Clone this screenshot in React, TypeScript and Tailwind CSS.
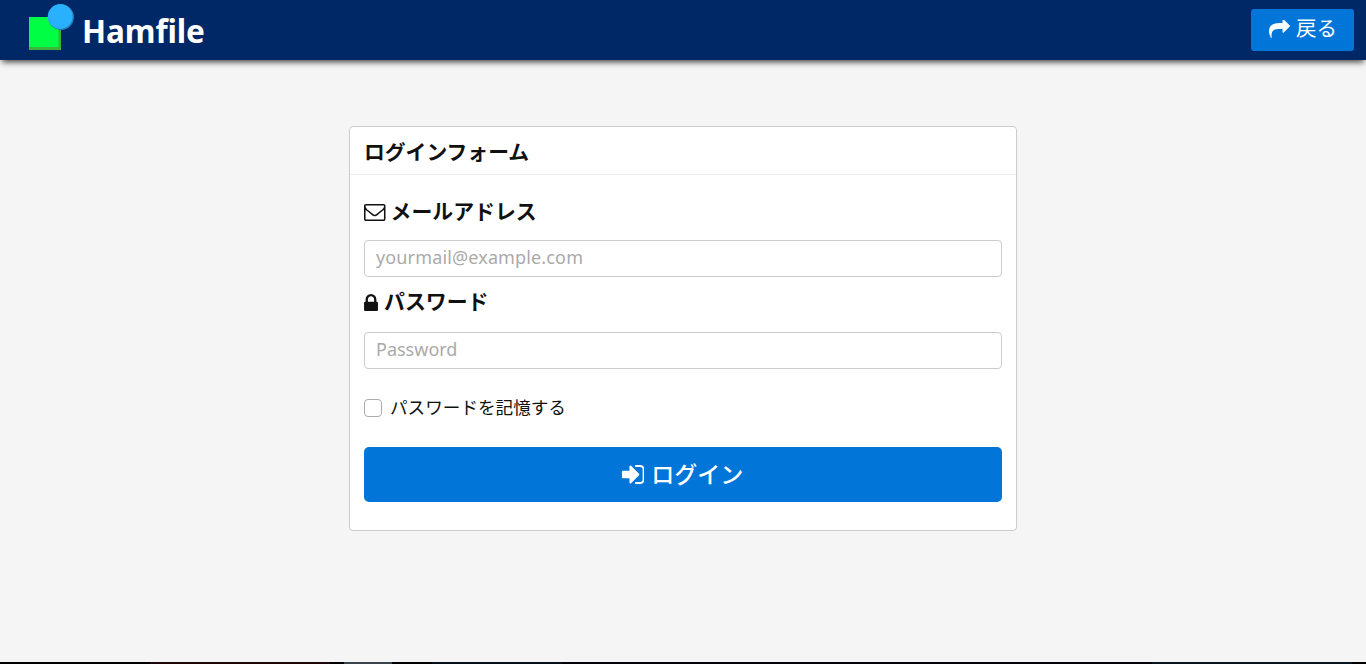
import React from 'react';

type IconProps = { className: string; viewBox: string; d: string };

function Icon({ className, viewBox, d }: IconProps) {
  return (
    <svg className={`block shrink-0 ${className}`} viewBox={viewBox} fill="currentColor" aria-hidden="true">
      <path d={d} />
    </svg>
  );
}

const SHARE =
  'M1792 640q0 26-19 45l-512 512q-19 19-45 19t-45-19-19-45v-256h-224q-98 0-175.500 6t-154 21.500-133 42.500-105.500 69.500-80 101-48.500 138.500-17.500 181q0 55 5 123 0 6 2.500 23.500t2.500 26.500q0 15-8.500 25t-23.500 10q-16 0-28-17-7-9-13-22t-13.500-30-10.500-24q-127-285-127-451 0-199 53-333 162-403 875-403h224v-256q0-26 19-45t45-19 45 19l512 512q19 19 19 45z';
const ENVELOPE =
  'M1664 1504v-768q-32 36-69 66-268 206-426 338-51 43-83 67t-86.500 48.500-102.500 24.500h-2q-48 0-102.500-24.500t-86.500-48.500-83-67q-158-132-426-338-37-30-69-66v768q0 13 9.500 22.500t22.500 9.500h1472q13 0 22.500-9.500t9.500-22.500zm0-1051v-24.500l-.5-13-3-12.500-5.500-9-9-7.500-14-2.500h-1472q-13 0-22.500 9.500t-9.500 22.500q0 168 147 284 193 152 401 317 6 5 35 29.500t46 37.500 44.500 31.500 50.500 27.500 43 9h2q20 0 43-9t50.500-27.500 44.500-31.500 46-37.500 35-29.500q208-165 401-317 54-43 100.500-115.500t46.500-131.500zm128-37v1088q0 66-47 113t-113 47h-1472q-66 0-113-47t-47-113v-1088q0-66 47-113t113-47h1472q66 0 113 47t47 113z';
const LOCK =
  'M640 768h512v-192q0-106-75-181t-181-75-181 75-75 181v192zm832 96v576q0 40-28 68t-68 28h-960q-40 0-68-28t-28-68v-576q0-40 28-68t68-28h32v-192q0-184 132-316t316-132 316 132 132 316v192h32q40 0 68 28t28 68z';
const SIGN_IN =
  'M1312 896q0 26-19 45l-544 544q-19 19-45 19t-45-19-19-45v-288h-448q-26 0-45-19t-19-45v-384q0-26 19-45t45-19h448v-288q0-26 19-45t45-19 45 19l544 544q19 19 19 45zm352-352v704q0 119-84.500 203.500t-203.500 84.500h-320q-13 0-22.500-9.500t-9.500-22.500q0-4-1-20t-.5-26.500 3-23.500 10-19.500 20.500-6.500h320q66 0 113-47t47-113v-704q0-66-47-113t-113-47h-312l-11.500-1-11.500-3-8-5.500-7-9-2-13.500q0-4-1-20t-.5-26.500 3-23.500 10-19.500 20.500-6.500h320q119 0 203.500 84.500t84.500 203.500z';

function Logo() {
  return (
    <svg className="block h-[60px] w-[50px] shrink-0" viewBox="28 0 50 60" aria-hidden="true">
      <rect x="29" y="17" width="32" height="33" fill="#3cb43c" />
      <rect x="29" y="17" width="29.500" height="30" fill="#00ff44" />
      <circle cx="61" cy="17.200" r="12.900" fill="#2480b8" />
      <circle cx="60.200" cy="16.400" r="12.400" fill="#29b0ff" />
    </svg>
  );
}

export default function App() {
  return (
    <div className="flex h-[664px] w-full flex-col overflow-hidden bg-[#f5f5f5] font-['Noto_Sans','Noto_Sans_CJK_JP',sans-serif] text-[#111]">
      <header className="flex h-[60px] shrink-0 items-center justify-between bg-[#002766] pr-3 pl-7 text-white shadow-[0_4px_6px_-2px_rgba(0,0,0,0.75)]">
        <a href="#" className="flex items-center">
          <Logo />
          <span className="ml-1 pt-px text-[31.500px] leading-none font-bold tracking-[-0.1px]">Hamfile</span>
        </a>
        <button className="flex h-[42px] w-[103px] items-center rounded-[3px] bg-[#0275d8] pl-[18px]">
          <Icon className="mb-0.5 h-[18px] w-[21px]" viewBox="0 128 1792 1536" d={SHARE} />
          <span className="ml-1.5 pb-[3px] text-[20.500px] leading-none">戻る</span>
        </button>
      </header>

      <main className="flex grow justify-center pt-[66px]">
        <section className="flex h-[405px] w-[668px] flex-col rounded-[4px] border border-[#ccc] bg-white">
          <h1 className="flex h-12 shrink-0 items-center border-b border-[#eee] pl-3.5 pt-1 text-[20.800px] leading-none font-bold">
            ログインフォーム
          </h1>
          <form className="flex flex-col px-3.5" onSubmit={(e) => e.preventDefault()}>
            <label htmlFor="mail" className="mt-[21px] flex h-[30px] items-center text-[20.900px] leading-none font-bold">
              <Icon className="mt-0.5 h-[17px] w-[21.500px]" viewBox="0 256 1792 1408" d={ENVELOPE} />
              <span className="ml-[5px]">メールアドレス</span>
            </label>
            <input
              id="mail"
              type="email"
              placeholder="yourmail@example.com"
              className="mt-[14px] h-[37px] w-full rounded-[4px] border border-[#ccc] px-[11px] pb-[3px] text-[18px] leading-none tracking-[0.14px] placeholder:text-[#aaa]"
            />
            <label htmlFor="password" className="mt-[9px] flex h-[30px] items-center text-[20.900px] leading-none font-bold">
              <Icon className="mt-0.5 h-[17px] w-[14px]" viewBox="320 128 1152 1408" d={LOCK} />
              <span className="ml-1.5">パスワード</span>
            </label>
            <input
              id="password"
              type="password"
              placeholder="Password"
              className="mt-[16px] h-[37px] w-full rounded-[4px] border border-[#ccc] px-[11px] pb-[3px] text-[18px] leading-none placeholder:text-[#aaa]"
            />
            <label className="mt-[24px] flex h-[30px] items-center text-[17.600px] leading-none">
              <input type="checkbox" className="h-[18px] w-[18px] appearance-none rounded-[4px] border border-[#aaa] bg-white" />
              <span className="ml-2 pb-px">パスワードを記憶する</span>
            </label>
            <button className="mt-6 flex h-[55px] w-full items-center justify-center rounded-[5px] bg-[#0275d8] pr-0.5 text-white">
              <Icon className="h-[19px] w-[23.500px]" viewBox="64 256 1600 1280" d={SIGN_IN} />
              <span className="ml-[7px] text-[23px] leading-none font-medium">ログイン</span>
            </button>
          </form>
        </section>
      </main>

      <footer className="flex h-0.5 shrink-0 bg-black">
        <div className="w-[150px]" />
        <div className="w-[180px] bg-[#1c0608]" />
        <div className="w-[14px]" />
        <div className="w-[48px] bg-[#3a434c]" />
        <div className="w-[40px]" />
        <div className="w-[130px] bg-[#040f1a]" />
        <div className="w-[590px] bg-[#020306]" />
        <div className="w-[200px] bg-[#07131f]" />
      </footer>
    </div>
  );
}
